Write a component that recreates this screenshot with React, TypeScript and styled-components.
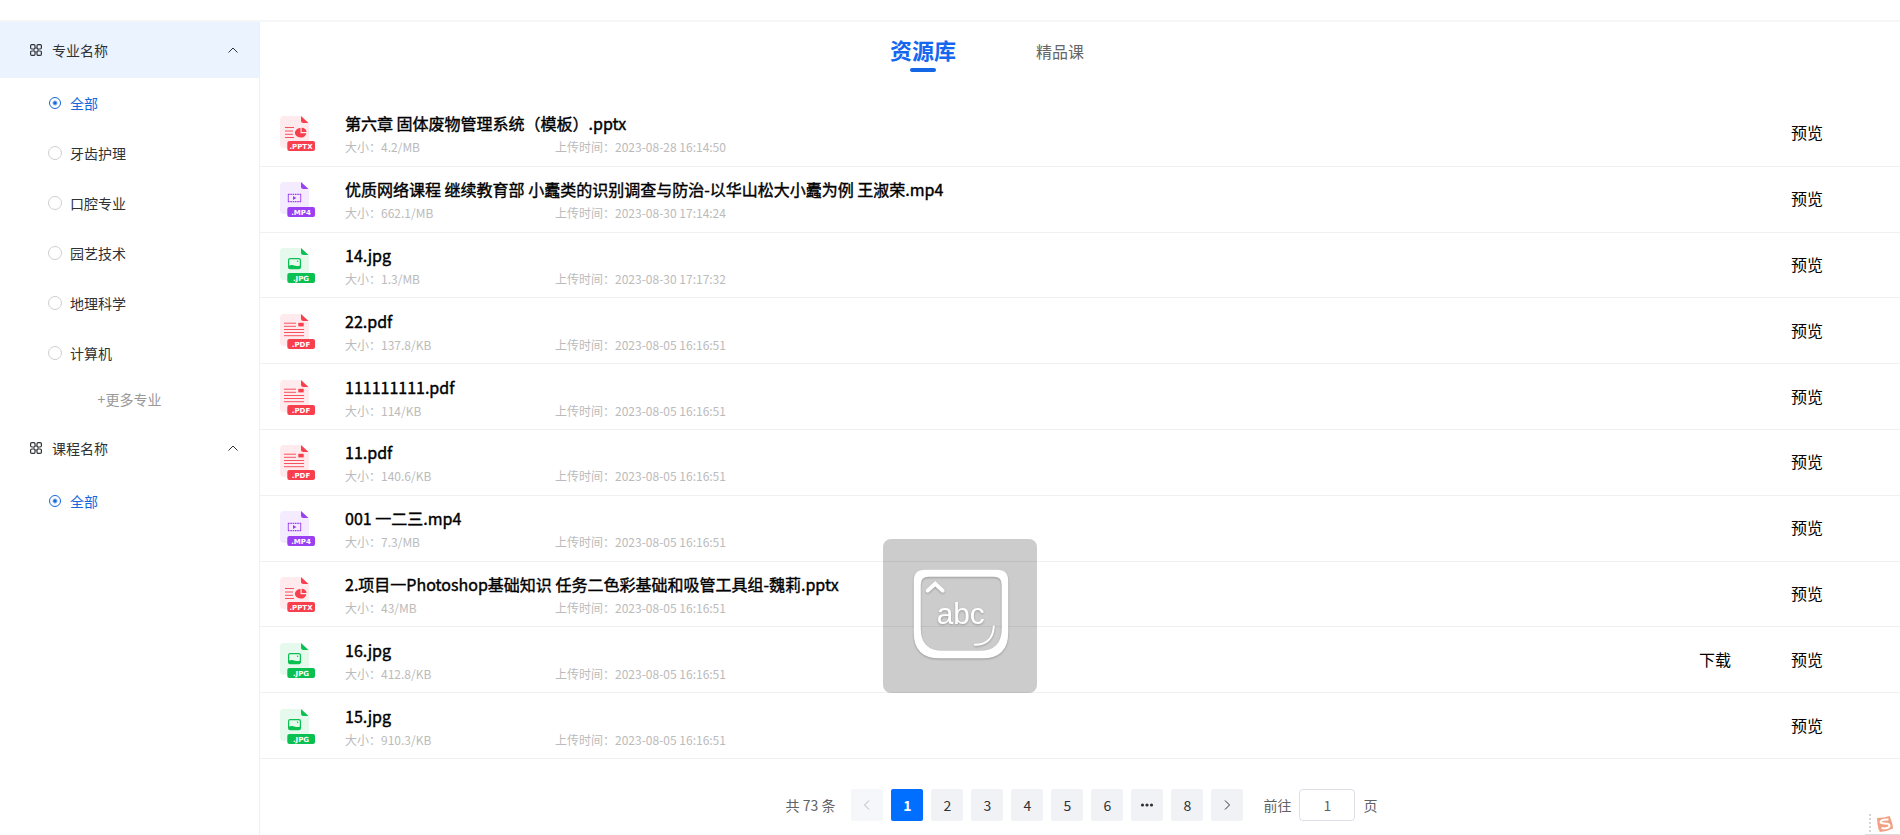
import React, { useState } from "react";
import styled, { createGlobalStyle } from "styled-components";

const GlobalStyle = createGlobalStyle`
  * { box-sizing: border-box; }
  body {
    margin: 0;
    background: #fff;
    color: #303133;
    font-family: "Noto Sans CJK SC", "Noto Sans", sans-serif;
    font-size: 14px;
  }
  button, input { font: inherit; color: inherit; }
  button { background: none; border: 0; padding: 0; cursor: pointer; }
  h2, ul, p { margin: 0; padding: 0; list-style: none; font-weight: 400; }
  fieldset { margin: 0; padding: 0; border: 0; min-width: 0; }
`;

const Page = styled.div`
  display: flex;
  flex-direction: column;
  min-height: 100vh;
`;

const TopBar = styled.header`
  height: 22px;
  border-bottom: 2px solid #f6f6f6;
`;

const Body = styled.div`
  display: flex;
  flex: 1;
`;

const Sidebar = styled.aside`
  flex: 0 0 260px;
  border-right: 1px solid #f0f0f0;
`;

const GroupHeader = styled.button<{ $active?: boolean }>`
  display: flex;
  align-items: center;
  width: 100%;
  height: 56px;
  padding: 0 20px 0 30px;
  background: ${(p) => (p.$active ? "#ebf3ff" : "#fff")};
`;

const GroupTitle = styled.span`
  flex: 1;
  padding-left: 10px;
  text-align: left;
`;

const Option = styled.label<{ $checked: boolean }>`
  display: flex;
  align-items: center;
  gap: 8px;
  height: 50px;
  padding-left: 48px;
  color: ${(p) => (p.$checked ? "#1467dc" : "#303133")};
  cursor: pointer;
`;

const Radio = styled.input`
  appearance: none;
  width: 14px;
  height: 14px;
  margin: 0;
  border: 1px solid #cfcfcf;
  border-radius: 50%;
  background: #fff;
  &:checked {
    width: 12px;
    height: 12px;
    margin: 1px;
    border-color: #1467dc;
    background: radial-gradient(circle, #1467dc 0 1px, #fff 3px);
  }
`;

const More = styled.button`
  display: block;
  width: 100%;
  height: 42px;
  color: #999;
`;

const Main = styled.main`
  flex: 1;
  min-width: 0;
`;

const Tabs = styled.nav`
  display: flex;
  justify-content: center;
  align-items: center;
  gap: 80px;
  height: 79px;
  padding: 0 186px 22px 0;
`;

const Tab = styled.button<{ $active?: boolean }>`
  position: relative;
  color: ${(p) => (p.$active ? "#1467ee" : "#666")};
  font-size: ${(p) => (p.$active ? 22 : 16)}px;
  font-weight: ${(p) => (p.$active ? 700 : 400)};
  line-height: ${(p) => (p.$active ? 28 : 32)}px;
  padding-bottom: ${(p) => (p.$active ? 4 : 0)}px;
  &::after {
    content: "";
    display: ${(p) => (p.$active ? "block" : "none")};
    position: absolute;
    left: 50%;
    bottom: -5px;
    width: 26px;
    height: 4px;
    margin-left: -13px;
    border-radius: 2px;
    background: #1467e4;
  }
`;

const FileList = styled.ul`
  display: grid;
  grid-auto-rows: 1fr;
  min-height: 658px;
`;

const FileRow = styled.li`
  display: flex;
  align-items: center;
  padding: 0 77px 0 20px;
  border-bottom: 1px solid #f0f0f0;
`;

const FileInfo = styled.div`
  flex: 1;
  min-width: 0;
  padding-left: 29px;
`;

const FileName = styled.h2`
  color: #000;
  font-size: 16px;
  line-height: 28px;
  -webkit-text-stroke: 0.4px #000;
`;

const FileMeta = styled.p`
  display: grid;
  grid-template-columns: 210px auto;
  color: #bbb;
  font-size: 12px;
  line-height: 20px;
`;

const Actions = styled.div`
  display: flex;
  gap: 60px;
  padding-bottom: 2px;
`;

const Action = styled.button`
  color: #000;
  font-size: 16px;
  line-height: 24px;
`;

const Pager = styled.nav`
  display: flex;
  justify-content: center;
  align-items: center;
  gap: 8px;
  padding: 30px 0 14px 3px;
  color: #606266;
`;

const PagerTotal = styled.span`
  padding-right: 8px;
`;

const PagerButton = styled.button<{ $active?: boolean }>`
  display: flex;
  align-items: center;
  justify-content: center;
  width: 32px;
  height: 32px;
  border-radius: 2px;
  background: ${(p) => (p.$active ? "#006eff" : "#f0f2f5")};
  color: ${(p) => (p.$active ? "#fff" : "#303133")};
  font-weight: ${(p) => (p.$active ? 700 : 400)};
  &:disabled {
    background: #f5f7fa;
    color: #b4b7bd;
  }
`;

const Jump = styled.label`
  display: flex;
  align-items: center;
  gap: 8px;
  padding-left: 12px;
`;

const JumpInput = styled.input`
  width: 56px;
  height: 32px;
  padding: 0;
  border: 1px solid #dcdfe6;
  border-radius: 4px;
  text-align: center;
`;

const KeyHint = styled.div`
  position: fixed;
  left: 883px;
  top: 539px;
  width: 154px;
  height: 154px;
  border-radius: 8px;
  background: rgba(0, 0, 0, 0.2);
  pointer-events: none;
`;

const KeyCap = styled.svg`
  display: block;
  filter: drop-shadow(0 1px 1px rgba(0, 0, 0, 0.25));
`;

const ImeBar = styled.div`
  position: fixed;
  right: 0;
  bottom: 0;
  width: 35px;
  height: 24px;
  pointer-events: none;
`;

const GridIcon = () => (
  <svg width="12" height="12" viewBox="0 0 12 12" fill="none" stroke="#303337" strokeWidth="1.2" aria-hidden="true">
    <rect x="0.6" y="0.6" width="4.4" height="4.4" rx="1.2" />
    <rect x="7" y="0.6" width="4.4" height="4.4" rx="1.2" />
    <rect x="0.6" y="7" width="4.4" height="4.4" rx="1.2" />
    <rect x="7" y="7" width="4.4" height="4.4" rx="1.2" />
    <path d="M5 4h2M5 8h2M4 5v2M8 5v2" strokeWidth="0.8" />
  </svg>
);

const chevrons = { up: "M1.5 8.5 6 4l4.5 4.5", left: "M8 1.5 3.5 6 8 10.5", right: "M4 1.5 8.5 6 4 10.5" };

const Chevron = ({ dir }: { dir: keyof typeof chevrons }) => (
  <svg width="12" height="12" viewBox="0 0 12 12" fill="none" stroke="currentColor" aria-hidden="true">
    <path d={chevrons[dir]} />
  </svg>
);

type Kind = "pptx" | "mp4" | "jpg" | "pdf";

const tones: Record<Kind, { main: string; pale: string }> = {
  pptx: { main: "#f73f4d", pale: "#ffebed" },
  pdf: { main: "#f73f4d", pale: "#ffebed" },
  mp4: { main: "#9b3ff2", pale: "#f5ebff" },
  jpg: { main: "#0ac052", pale: "#e5f9ed" },
};

const Glyph = ({ kind, color }: { kind: Kind; color: string }) => {
  if (kind === "pptx")
    return (
      <>
        <path d="M5 11.5h9M5 15h8M5 18.3h8M5 21.5h9" stroke={color} strokeWidth="0.9" />
        <path d="M20.5 12a5.7 4.8 0 1 0 5.8 5.2h-5.8z" fill={color} />
        <path d="M21.7 11.8a5 4.3 0 0 1 4.8 4.3h-4.8z" fill={color} />
      </>
    );
  if (kind === "pdf")
    return (
      <>
        <path d="M4 9.2h12M4 12.3h12M4 15.5h20M4 18.5h20M4 21.7h20" stroke={color} strokeWidth="0.9" />
        <rect x="18.3" y="8.8" width="5.4" height="3.6" fill={color} />
      </>
    );
  if (kind === "mp4")
    return (
      <>
        <path d="M8 12.3h13M8 19.7h13" stroke={color} strokeWidth="1.2" strokeDasharray="1.6 0.7" />
        <path d="M8.3 12v8M20.7 12v8" stroke={color} strokeWidth="0.9" />
        <path d="m13 14.1 3.4 1.9-3.4 1.9z" fill={color} />
      </>
    );
  return (
    <>
      <rect x="8.6" y="10.6" width="11.8" height="10" rx="1.5" fill="none" stroke={color} strokeWidth="1.2" />
      <path d="M8.5 17.8c2-.9 3.800-.9 5.300-.3 1.700.6 3.800.6 6.700-.1v2.400q0 1.300-1.300 1.300H9.800q-1.300 0-1.300-1.300z" fill={color} />
      <circle cx="17.600" cy="13.200" r="0.700" fill={color} />
    </>
  );
};

const FileIcon = ({ kind }: { kind: Kind }) => {
  const { main, pale } = tones[kind];
  return (
    <svg width="36" height="36" viewBox="0 -1 36 36" aria-hidden="true">
      <path d="M4 0h17l8 7.5v24.500H4q-4 0-4-4V4q0-4 4-4z" fill={pale} />
      <path d="M21 0l7.500 7h-5q-2.500 0-2.500-2.500z" fill={main} />
      <Glyph kind={kind} color={main} />
      <rect x="7.300" y="25" width="27.700" height="10" rx="2" fill={main} />
      <text x="21" y="32.500" textAnchor="middle" fontSize="7" fontWeight="700" fontFamily="DejaVu Sans, sans-serif" fill="#fff">
        {"." + kind.toUpperCase()}
      </text>
    </svg>
  );
};

interface FileItem {
  name: string;
  kind: Kind;
  size: string;
  time: string;
  download?: boolean;
}

const files: FileItem[] = [
  { name: "第六章 固体废物管理系统（模板）.pptx", kind: "pptx", size: "4.2/MB", time: "2023-08-28 16:14:50" },
  { name: "优质网络课程 继续教育部 小蠹类的识别调查与防治-以华山松大小蠹为例 王淑荣.mp4", kind: "mp4", size: "662.1/MB", time: "2023-08-30 17:14:24" },
  { name: "14.jpg", kind: "jpg", size: "1.3/MB", time: "2023-08-30 17:17:32" },
  { name: "22.pdf", kind: "pdf", size: "137.8/KB", time: "2023-08-05 16:16:51" },
  { name: "111111111.pdf", kind: "pdf", size: "114/KB", time: "2023-08-05 16:16:51" },
  { name: "11.pdf", kind: "pdf", size: "140.6/KB", time: "2023-08-05 16:16:51" },
  { name: "001 一二三.mp4", kind: "mp4", size: "7.3/MB", time: "2023-08-05 16:16:51" },
  { name: "2.项目一Photoshop基础知识 任务二色彩基础和吸管工具组-魏莉.pptx", kind: "pptx", size: "43/MB", time: "2023-08-05 16:16:51" },
  { name: "16.jpg", kind: "jpg", size: "412.8/KB", time: "2023-08-05 16:16:51", download: true },
  { name: "15.jpg", kind: "jpg", size: "910.3/KB", time: "2023-08-05 16:16:51" },
];

const majors = ["全部", "牙齿护理", "口腔专业", "园艺技术", "地理科学", "计算机"];
const courses = ["全部"];

const OptionGroup = ({ name, label, options }: { name: string; label: string; options: string[] }) => {
  const [value, setValue] = useState(options[0]);
  return (
    <fieldset aria-label={label}>
      {options.map((o) => (
        <Option key={o} $checked={o === value}>
          <Radio type="radio" name={name} checked={o === value} onChange={() => setValue(o)} />
          {o}
        </Option>
      ))}
    </fieldset>
  );
};

export default function App() {
  const [target, setTarget] = useState("1");
  return (
    <Page>
      <GlobalStyle />
      <TopBar />
      <Body>
        <Sidebar>
          <GroupHeader type="button" $active>
            <GridIcon />
            <GroupTitle>专业名称</GroupTitle>
            <Chevron dir="up" />
          </GroupHeader>
          <OptionGroup name="major" label="专业名称" options={majors} />
          <More type="button">+更多专业</More>
          <GroupHeader type="button">
            <GridIcon />
            <GroupTitle>课程名称</GroupTitle>
            <Chevron dir="up" />
          </GroupHeader>
          <OptionGroup name="course" label="课程名称" options={courses} />
        </Sidebar>
        <Main>
          <Tabs>
            <Tab type="button" $active>资源库</Tab>
            <Tab type="button">精品课</Tab>
          </Tabs>
          <FileList>
            {files.map((f) => (
              <FileRow key={f.name}>
                <FileIcon kind={f.kind} />
                <FileInfo>
                  <FileName>{f.name}</FileName>
                  <FileMeta>
                    <span>大小：{f.size}</span>
                    <span>上传时间：{f.time}</span>
                  </FileMeta>
                </FileInfo>
                <Actions>
                  {f.download && <Action type="button">下载</Action>}
                  <Action type="button">预览</Action>
                </Actions>
              </FileRow>
            ))}
          </FileList>
          <Pager aria-label="分页">
            <PagerTotal>共 73 条</PagerTotal>
            <PagerButton type="button" disabled aria-label="上一页"><Chevron dir="left" /></PagerButton>
            {[1, 2, 3, 4, 5, 6].map((n) => (
              <PagerButton key={n} type="button" $active={n === 1}>{n}</PagerButton>
            ))}
            <PagerButton type="button" aria-label="更多页">
              <svg width="14" height="14" viewBox="0 0 14 14" fill="currentColor" aria-hidden="true">
                <circle cx="2.500" cy="7" r="1.600" />
                <circle cx="7" cy="7" r="1.600" />
                <circle cx="11.500" cy="7" r="1.600" />
              </svg>
            </PagerButton>
            <PagerButton type="button">8</PagerButton>
            <PagerButton type="button" aria-label="下一页"><Chevron dir="right" /></PagerButton>
            <Jump>
              前往
              <JumpInput type="text" value={target} onChange={(e) => setTarget(e.target.value)} />
              页
            </Jump>
          </Pager>
        </Main>
      </Body>
      <KeyHint>
        <KeyCap width="154" height="154" viewBox="0 0 155 155" fill="none" stroke="#fff" strokeLinecap="round">
          <path
            d="M42 31h73q11 0 11 11v52q0 26-26 26H57q-26 0-26-26V42q0-11 11-11zM46 38q-8 0-8 8v44q0 22.500 22.500 22.500h36.500q22.500 0 22.500-22.500V46q0-8-8-8z"
            fill="#fff"
            stroke="none"
            fillRule="evenodd"
          />
          <path d="M45 52l7.500-7 7.500 7" strokeWidth="4" />
          <path d="M111.500 88q-1 18-19 18.500" strokeWidth="2" />
          <text x="54" y="86" fontSize="30" fontFamily="Liberation Sans, sans-serif" fill="#fff" stroke="none">abc</text>
        </KeyCap>
      </KeyHint>
      <ImeBar>
        <svg width="35" height="24" viewBox="0 0 35 24" fill="none" aria-hidden="true">
          <path d="M5 3v20" stroke="#d5d5d8" strokeWidth="2" strokeDasharray="2 2" />
          <path d="M0 23.500h35" stroke="#dcdcdc" />
          <path d="M12 7q7 0 12.500-2l1.500 3.500q2 5 2 9-6 3-13 3.500-2-3-2.500-8z" fill="#f2a083" />
          <path d="M23.500 8.500q-7-.5-8 2.500c0 3 9 0 9 3.500 0 2.500-4 3.500-8 2.500" stroke="#fff" strokeWidth="2" />
        </svg>
      </ImeBar>
    </Page>
  );
}
